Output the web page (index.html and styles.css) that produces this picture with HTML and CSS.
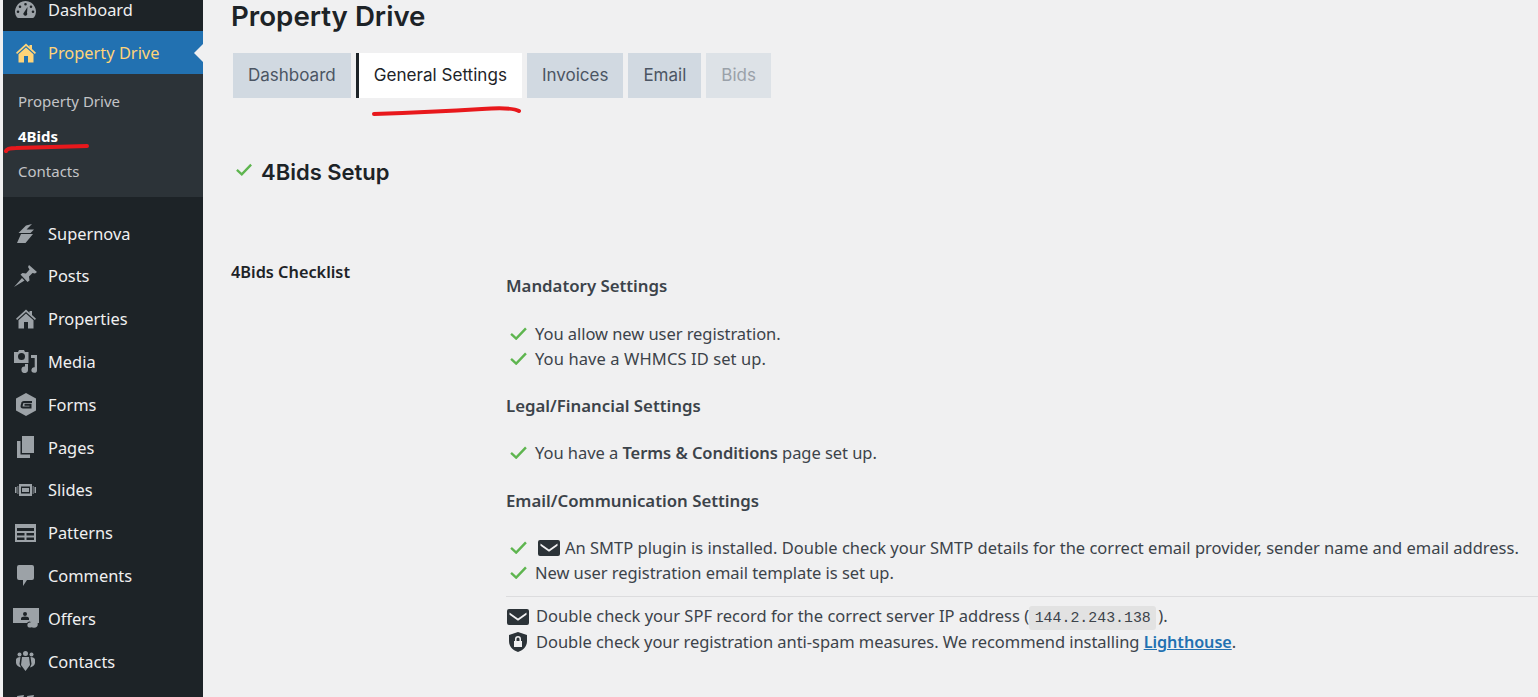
FILE: index.html
```html
<!DOCTYPE html>
<html lang="en">
<head>
<meta charset="utf-8">
<title>Property Drive</title>
<link rel="stylesheet" href="styles.css">
</head>
<body>
<svg class="sprite" width="0" height="0" aria-hidden="true">
  <symbol id="i-home" viewBox="0 0 20 20"><path d="M10 0.500 L13.500 3.700 V2 H16 V6 L20 9.700 L18.900 10.900 L10 2.900 L1.100 10.900 L0 9.700 Z M10 4.500 L17.500 11.200 V19.500 H2.500 V11.200 Z M8 13 V19.500 H12 V13 Z" fill-rule="evenodd"/></symbol>
  <symbol id="i-check" viewBox="0 0 18 14"><path d="M1 7.500 L6.500 12.500 L17 1.500" fill="none" stroke="#5eb54f" stroke-width="2.600"/></symbol>
  <symbol id="i-mail" viewBox="0 0 22 16"><path d="M2 0 H20 A2 2 0 0 1 22 2 V14 A2 2 0 0 1 20 16 H2 A2 2 0 0 1 0 14 V2 A2 2 0 0 1 2 0 Z M2.500 3.500 L11 9.500 L19.500 3.500 L19.500 5.800 L11 11.800 L2.500 5.800 Z" fill="#2c3338" fill-rule="evenodd"/></symbol>
  <symbol id="i-shield" viewBox="0 0 18 20"><path d="M9 0 L18 3 V9 C18 15 13.500 18.500 9 20 C4.500 18.500 0 15 0 9 V3 Z M6 9 V7 A3 3 0 0 1 12 7 V9 H13 V15 H5 V9 Z M7.500 9 H10.500 V7 A1.500 1.500 0 0 0 7.500 7 Z" fill="#2c3338" fill-rule="evenodd"/></symbol>
</svg>
<div class="layout">
  <nav class="sidebar">
    <a class="item"><span class="ico ico-gauge"><svg viewBox="0 0 21 17"><path fill-rule="evenodd" d="M10.500 0 A10.500 10.500 0 0 0 2 16.500 Q3 17 5 17 H16 Q18 17 19 16.500 A10.500 10.500 0 0 0 10.500 0 Z M10.500 2 a1.300 1.300 0 1 1 0 2.600 a1.300 1.300 0 1 1 0 -2.600 Z M5 4.500 a1.300 1.300 0 1 1 0 2.600 a1.300 1.300 0 1 1 0 -2.600 Z M16 4.500 a1.300 1.300 0 1 1 0 2.600 a1.300 1.300 0 1 1 0 -2.600 Z M3 9.500 a1.300 1.300 0 1 1 0 2.600 a1.300 1.300 0 1 1 0 -2.600 Z M18 9.500 a1.300 1.300 0 1 1 0 2.600 a1.300 1.300 0 1 1 0 -2.600 Z M12.500 6 L12 12 A1.900 1.900 0 1 1 9 11.500 Z"/></svg></span>Dashboard</a>
    <a class="item item-active"><span class="ico"><svg class="ic-home"><use href="#i-home"/></svg></span>Property Drive</a>
    <div class="submenu">
      <a class="sub">Property Drive</a>
      <a class="sub sub-current">4Bids</a>
      <a class="sub">Contacts</a>
    </div>
    <a class="item"><span class="ico"><svg class="ic-bolt" viewBox="0 0 17 19"><path d="M15 0 L9.500 5.500 H17 L13.500 9 H1.500 L9 1.500 Z M4 10 H16 L8.500 19 H0 Z"/></svg></span>Supernova</a>
    <a class="item"><span class="ico"><svg class="ic-pin" viewBox="0 0 23 22"><path d="M15 0 L23 7 L21 8.500 L18.500 8 L15 11.500 L15.500 15.500 L13.500 17 L6.500 9.500 L8.500 8 L12 8.500 L15.500 4.500 L14 2 Z M8 13 L10.500 15.500 L0 22 Z"/></svg></span>Posts</a>
    <a class="item"><span class="ico"><svg class="ic-home"><use href="#i-home"/></svg></span>Properties</a>
    <a class="item"><span class="ico"><svg class="ic-media" viewBox="0 0 23 23"><path fill-rule="evenodd" d="M5 0 H10 L11 2 H14.500 V13 H0 V2 H4 Z M7.500 3 a3.500 3.500 0 1 0 0 7 a3.500 3.500 0 1 0 0 -7 Z"/><path d="M17 5 H23 V20 a2.800 2.800 0 1 1 -2.300 -2.700 V8 H17 Z"/><path d="M11 14 H14 V19.500 a3.300 3.300 0 1 1 -3 -3 Z"/></svg></span>Media</a>
    <a class="item"><span class="ico"><svg class="ic-forms" viewBox="0 0 20 23"><path d="M10 0 L20 5.500 V17.500 L10 23 L0 17.500 V5.500 Z"/><path class="cut" d="M16 9 H8 Q6.300 9 6 11 L5.600 13 Q5.300 14.500 7 14.500 H14.500 V11.800 H8.500"/></svg></span>Forms</a>
    <a class="item"><span class="ico"><svg class="ic-pages" viewBox="0 0 17 22"><path d="M5 0 H17 V17 H5 Z M0 5 H3.500 V18.500 H13 V22 H0 Z"/></svg></span>Pages</a>
    <a class="item"><span class="ico"><svg class="ic-slides" viewBox="0 0 21 12"><path fill-rule="evenodd" d="M4 0 H17 V12 H4 Z M6 2.500 V9.500 H15 V2.500 Z M7 4 H14 V8 H7 Z M0 3 H1.500 V9 H0 Z M2.500 2 H3.300 V10 H2.500 Z M17.700 2 H18.500 V10 H17.700 Z M19.500 3 H21 V9 H19.500 Z"/></svg></span>Slides</a>
    <a class="item"><span class="ico"><svg class="ic-patterns" viewBox="0 0 21 18"><path fill-rule="evenodd" d="M0 0 H21 V18 H0 Z M2 4 V7 H19 V4 Z M2 9 V11.500 H9.500 V9 Z M11.500 9 V11.500 H19 V9 Z M2 13.500 V16 H9.500 V13.500 Z M11.500 13.500 V16 H19 V13.500 Z"/></svg></span>Patterns</a>
    <a class="item"><span class="ico"><svg class="ic-comments" viewBox="0 0 17 21"><path d="M2 0 H15 Q17 0 17 2 V13 Q17 15 15 15 H10 L6 21 V15 H2 Q0 15 0 13 V2 Q0 0 2 0 Z"/></svg></span>Comments</a>
    <a class="item"><span class="ico"><svg class="ic-offers" viewBox="0 0 26 20"><path fill-rule="evenodd" d="M0 0 H26 V15 H24 A4 4 0 0 0 18 14 A3 3 0 0 0 14 15 H0 Z M12 4 a2 2 0 1 0 0 4 a2 2 0 1 0 0 -4 Z M8 12 H16 V10.500 Q16 8.500 12 8.500 T8 10.500 Z"/><circle cx="17" cy="17" r="2.600"/><circle cx="21" cy="16" r="3.800"/></svg></span>Offers</a>
    <a class="item"><span class="ico"><svg class="ic-contacts" viewBox="0 0 19 20"><circle cx="9.500" cy="2.500" r="2.500"/><circle cx="3.500" cy="3.500" r="2"/><circle cx="15.500" cy="3.500" r="2"/><path d="M6 6 H13 L14 14 L9.500 20 L5 14 Z M0 8.500 Q0.500 6 4.500 6 L3.500 13 L5 16.500 Q0.500 15 0 12 Z M19 8.500 Q18.500 6 14.500 6 L15.500 13 L14 16.500 Q18.500 15 19 12 Z"/></svg></span>Contacts</a>
    <a class="item"><span class="ico"><svg viewBox="0 0 20 20"><path d="M1 2 L8 1 L6 8 H2 Z M11 2 L18 1 L16 8 H12 Z"/></svg></span>Testimonials</a>
  </nav>

  <main class="main">
    <h1 class="title">Property Drive</h1>
    <div class="tabs">
      <a class="tab">Dashboard</a>
      <a class="tab tab-active">General Settings</a>
      <a class="tab">Invoices</a>
      <a class="tab">Email</a>
      <a class="tab tab-off">Bids</a>
    </div>
    <h2 class="setup"><svg class="setup-check"><use href="#i-check"/></svg>4Bids Setup</h2>
    <div class="form">
      <div class="form-label">4Bids Checklist</div>
      <div class="form-body">
        <h3 class="group group-first">Mandatory Settings</h3>
        <p class="row row-tight"><svg class="check"><use href="#i-check"/></svg><span>You allow new user registration.</span></p>
        <p class="row row-loose"><svg class="check"><use href="#i-check"/></svg><span>You have a WHMCS ID set up.</span></p>
        <h3 class="group">Legal/Financial Settings</h3>
        <p class="row row-tight"><svg class="check"><use href="#i-check"/></svg><span>You have a <strong>Terms &amp; Conditions</strong> page set up.</span></p>
        <h3 class="group group-email">Email/Communication Settings</h3>
        <p class="row"><svg class="check"><use href="#i-check"/></svg><svg class="mail mail-inline"><use href="#i-mail"/></svg><span>An SMTP plugin is installed. Double check your SMTP details for the correct email provider, sender name and email address.</span></p>
        <p class="row row-tight"><svg class="check"><use href="#i-check"/></svg><span>New user registration email template is set up.</span></p>
        <hr class="rule">
        <p class="row"><svg class="mail"><use href="#i-mail"/></svg><span>Double check your SPF record for the correct server IP address (<code class="ip">144.2.243.138</code>).</span></p>
        <p class="row row-tight"><svg class="shield"><use href="#i-shield"/></svg><span>Double check your registration anti-spam measures. We recommend installing <a class="link">Lighthouse</a>.</span></p>
      </div>
    </div>
  </main>
</div>
<svg class="ink ink-side" viewBox="0 0 86 10"><path d="M2 8 Q3 5 12 5 L83 3"/></svg>
<svg class="ink ink-tab" viewBox="0 0 150 12"><path d="M2 9 Q60 7 110 4 Q140 2 147 6"/></svg>
</body>
</html>
```
FILE: styles.css
```css
* { box-sizing: border-box; }
html, body { margin: 0; height: 697px; overflow: hidden; }
body { background: #f0f0f1; font-family: "Noto Sans", sans-serif; color: #3c434a; position: relative; }
.sprite { position: absolute; }
.layout { display: flex; height: 697px; overflow: hidden; padding-left: 3px; }

.sidebar { width: 200px; flex: none; background: #1d2327; margin-top: -11.500px; height: 760px; display: flex; flex-direction: column; }
.item { height: 42.800px; flex: none; display: flex; align-items: center; color: #f0f0f1; font-size: 16.400px; }
.ico { width: 45px; flex: none; display: flex; justify-content: center; }
.ico svg { width: 20px; height: 20px; fill: #9ca2a7; display: block; }
.ico .ic-bolt { width: 17px; height: 19px; }
.ico .ic-pin { width: 23px; height: 22px; }
.ico .ic-media { width: 23px; height: 23px; }
.ico .ic-forms { width: 20px; height: 23px; }
.ico .ic-forms .cut { fill: none; stroke: #1d2327; stroke-width: 2; }
.ico .ic-pages { width: 17px; height: 22px; }
.ico .ic-slides { width: 21px; height: 12px; }
.ico .ic-patterns { width: 21px; height: 18px; }
.ico .ic-comments { width: 17px; height: 21px; }
.ico .ic-offers { width: 26px; height: 20px; }
.ico .ic-contacts { width: 19px; height: 20px; }
.ico-gauge svg { width: 21px; height: 17px; }
.item-active { background: #2271b1; color: #ffd479; position: relative; }
.item-active .ico svg { fill: #ffd479; }
.item-active::after { content: ""; position: absolute; right: 0; top: 50%; margin-top: -9px; border: 9px solid transparent; border-right-color: #f0f0f1; border-left-width: 0; }
.submenu { background: #2c3338; height: 123px; flex: none; padding-top: 9px; margin-bottom: 14.600px; display: flex; flex-direction: column; }
.sub { height: 35px; flex: none; display: flex; align-items: center; padding-left: 15px; font-size: 15px; color: #c3c4c7; }
.sub-current { color: #fff; font-weight: 700; }

.main { flex: 1; min-width: 0; padding-left: 28px; }
.title { font-family: Inter, sans-serif; font-weight: 600; font-size: 27.700px; line-height: 32px; margin: 0 0 21px; color: #1d2327; height: 32px; }
.tabs { display: flex; gap: 5px; margin-left: 2px; }
.tab { height: 45px; display: flex; align-items: center; padding: 0 15px 2px; background: #d1d9e1; color: #4b5563; font-family: Inter, sans-serif; font-size: 17px; }
.tab-active { background: #fff; color: #1d2327; border-left: 3px solid #1d2327; font-size: 17.100px; }
.tab-off { background: #dde2e7; color: #9aa1a9; }
.setup { display: flex; align-items: center; font-family: Inter, sans-serif; font-weight: 600; font-size: 22px; line-height: 30px; margin: 59px 0 0 5px; color: #1d2327; height: 30px; }
.setup-check { width: 16px; height: 13px; margin-right: 9px; position: relative; top: -3px; }

.form { display: flex; margin-top: 70px; }
.form-label { width: 275px; flex: none; font-size: 16.300px; font-weight: 600; color: #1d2327; line-height: 22px; padding-top: 4px; }
.form-body { flex: 1; min-width: 0; padding-top: 17px; }
.group { font-size: 16.800px; font-weight: 600; line-height: 24px; margin: 23px 0 22px; color: #3c434a; height: 24px; }
.group-first { margin: 0 0 23px; }
.group-email { margin-top: 24px; }
.row { display: flex; align-items: center; white-space: nowrap; margin: 0; height: 25px; font-size: 16.500px; line-height: 25px; }
.row-tight { letter-spacing: -0.050px; }
.row-loose { letter-spacing: 0.100px; }
.row strong { font-weight: 600; }
.check { width: 17px; height: 13px; margin: 0 8px 0 4px; flex: none; }
.mail { width: 22px; height: 16px; margin: 0 7px 0 1px; flex: none; }
.mail-inline { margin: 0 5px 0 3px; }
.shield { width: 18px; height: 20px; margin: 0 9px 0 3px; flex: none; }
.rule { border: 0; border-top: 1px solid #dcdcde; margin: 11px 0 7.500px; }
.ip { font-family: "Liberation Mono", monospace; font-size: 14.900px; background: #e2e2e2; border-radius: 3px; padding: 4px 5.500px; margin: 0 2px 0 0; color: #3c434a; }
.link { color: #2271b1; font-weight: 600; font-size: 16.200px; text-decoration: underline; }

.ink { position: absolute; fill: none; stroke: #e8181c; stroke-width: 4; stroke-linecap: round; }
.ink-side { left: 4px; top: 143px; width: 86px; height: 10px; }
.ink-tab { left: 372px; top: 105px; width: 150px; height: 12px; }
```
